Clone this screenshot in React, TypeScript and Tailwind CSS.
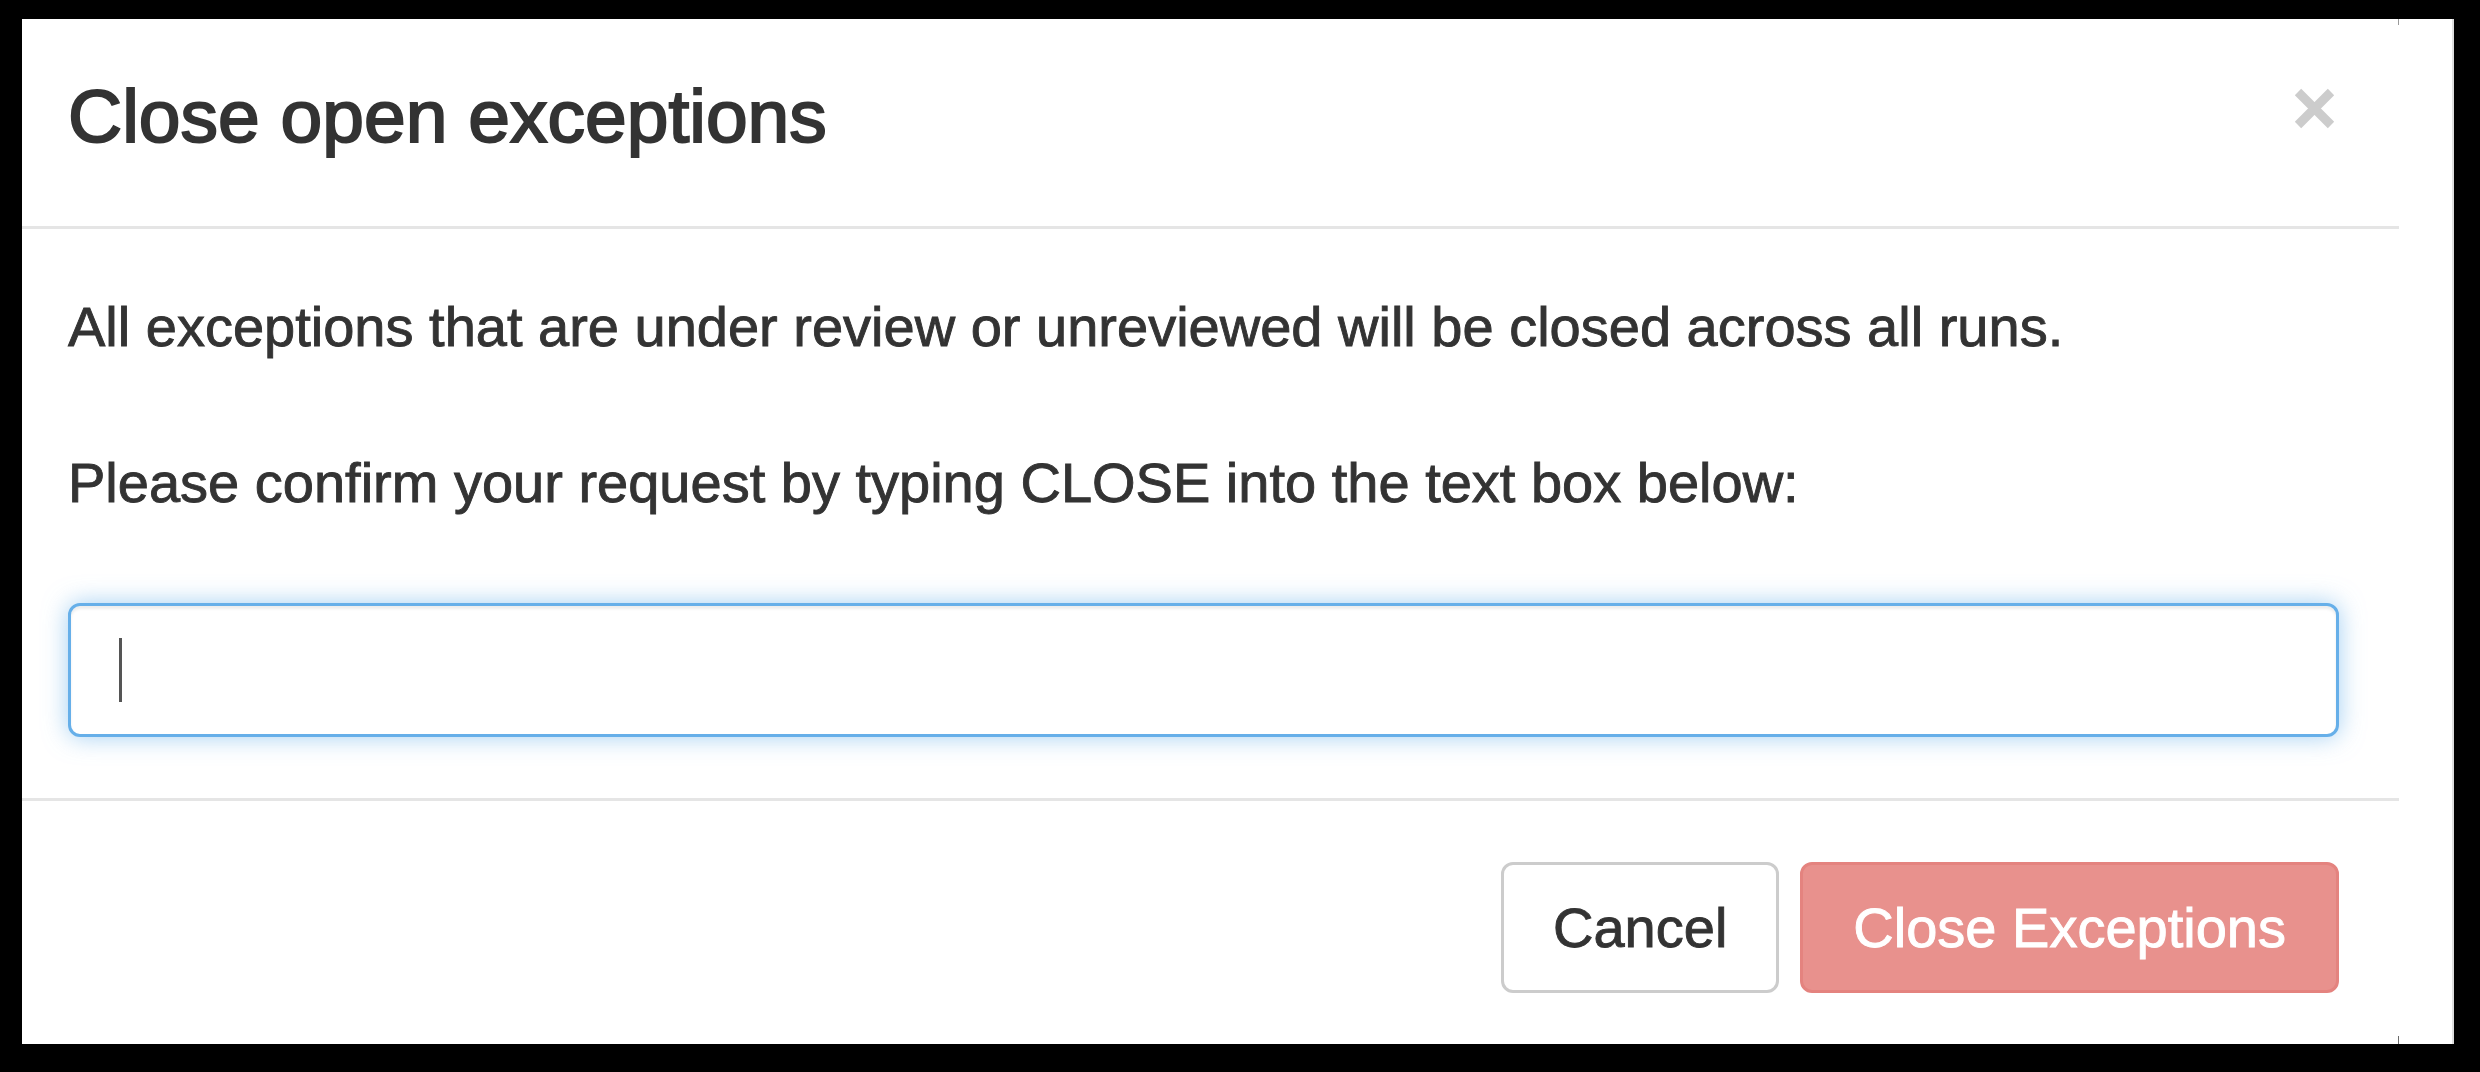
import React from 'react';

const CloseIcon: React.FC = () => (
  <svg width="41" height="41" viewBox="0 0 41 41" className="block">
    <path d="M4 4 L37 37 M37 4 L4 37" stroke="#cccccc" strokeWidth="9" strokeLinecap="butt" fill="none" />
  </svg>
);

const CloseExceptionsModal: React.FC = () => {
  return (
    <div className="relative w-[2377px] h-full bg-white text-[#333333]">
      {/* thin edge ticks where the modal ends */}
      <span className="absolute right-0 top-0 w-px h-[6px] bg-[#9a9a9a]" />
      <span className="absolute right-0 bottom-0 w-px h-[8px] bg-[#6a6a6a]" />

      <div className="flex items-start justify-between pl-[46px] pr-[60px] pt-[55px] pb-[68px] border-b-[3px] border-[#e5e5e5]">
        <h4 className="text-[75px] leading-[84px] font-normal [-webkit-text-stroke:2px_#333333]">
          Close open exceptions
        </h4>
        <button className="mt-[14px] mr-[4px]">
          <CloseIcon />
        </button>
      </div>

      <div className="pl-[46px] pr-[60px] pt-[66px] pb-[61px] border-b-[3px] border-[#e5e5e5]">
        <p className="text-[56px] leading-[64px] [-webkit-text-stroke:0.9px_#333333]">
          All exceptions that are under review or unreviewed will be closed across all runs.
        </p>
        <p className="mt-[92px] text-[56px] leading-[64px] [-webkit-text-stroke:0.9px_#333333]">
          Please confirm your request by typing CLOSE into the text box below:
        </p>
        <div className="mt-[88px] h-[134px] flex items-center pl-[48px] rounded-[12px] border-[3px] border-[#66afe9] bg-white shadow-[inset_0_3px_3px_rgba(0,0,0,0.075),0_0_24px_rgba(102,175,233,0.6)]">
          <span className="block w-[3px] h-[64px] bg-[#555555]" />
        </div>
      </div>

      <div className="flex justify-end pl-[46px] pr-[60px] pt-[61px]">
        <button className="h-[131px] px-[49px] flex items-center rounded-[12px] border-[3px] border-[#cccccc] bg-white text-[#333333] text-[56px] leading-[64px] [-webkit-text-stroke:0.9px_#333333]">
          Cancel
        </button>
        <button className="ml-[21px] h-[131px] px-[50px] flex items-center rounded-[12px] border-[3px] border-[#e4837f] bg-[#e8918d] text-white text-[56px] leading-[64px] [-webkit-text-stroke:0.9px_#ffffff]">
          Close Exceptions
        </button>
      </div>
    </div>
  );
};

const App: React.FC = () => {
  return (
    <div className="w-full h-[1072px] bg-black pt-[19px] pl-[22px] font-['Liberation_Sans',Arial,sans-serif]">
      <div className="w-[2432px] h-[1025px] bg-white border-r-2 border-[#dedede]">
        <CloseExceptionsModal />
      </div>
    </div>
  );
};

export default App;
